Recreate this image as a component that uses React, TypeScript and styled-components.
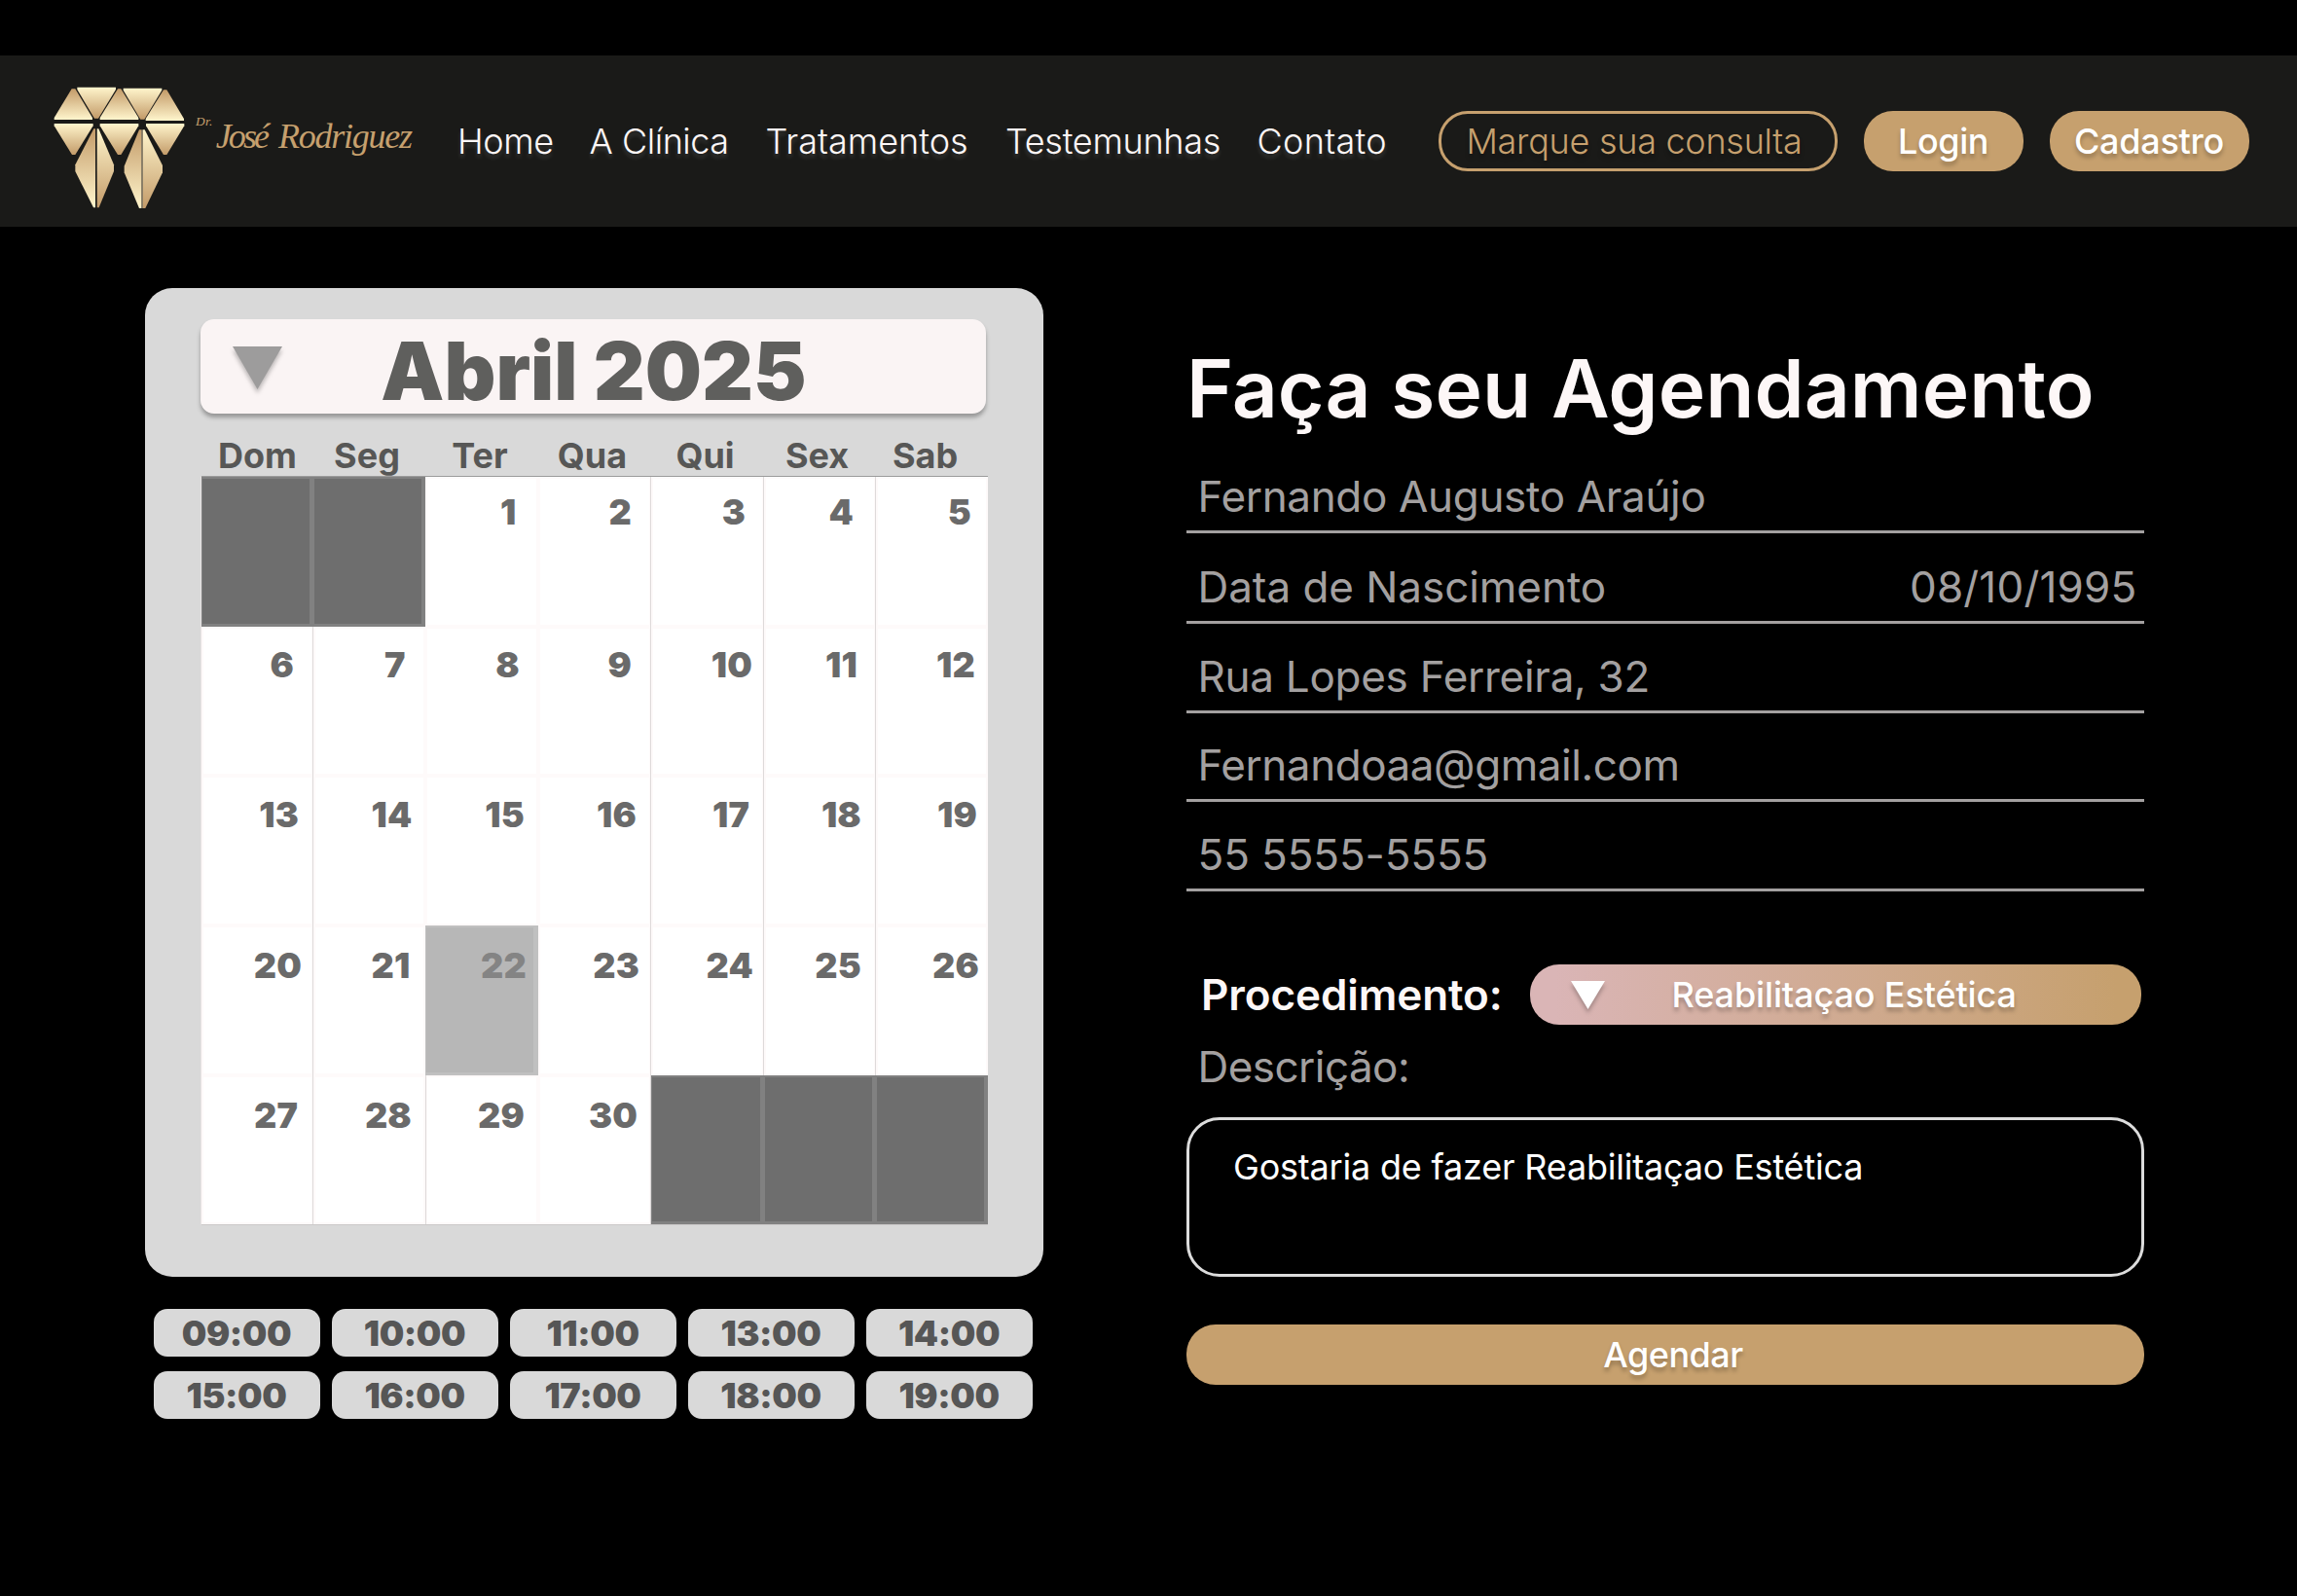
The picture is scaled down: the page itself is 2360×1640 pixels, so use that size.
import React from 'react';
import styled, { createGlobalStyle, css } from 'styled-components';

const GOLD = '#c6a06e';
const SILVER = '#d9d9d9';
const MUTED = '#a3a0a0';

const GlobalStyle = createGlobalStyle`
  *, *::before, *::after { box-sizing: border-box; }
  body {
    margin: 0;
    background: #000;
    font-family: Inter, "Liberation Sans", sans-serif;
    -webkit-font-smoothing: antialiased;
  }
  button { font: inherit; border: 0; margin: 0; padding: 0; background: none; color: inherit; }
`;

const Page = styled.div`
  width: 2360px;
  height: 1640px;
  padding-top: 57px;
  background: #000;
  overflow: hidden;
`;

/* ---------- header ---------- */

const Header = styled.header`
  display: flex;
  align-items: center;
  height: 176px;
  padding: 0 49.5px 0 40px;
  background: #1a1a18;
`;

const Logo = styled.svg`
  display: block;
  flex: none;
  width: 410px;
  height: 160px;
  margin-top: 10px;
  overflow: visible;
`;

const LogoText = styled.text`
  font-family: "Liberation Serif", serif;
  font-style: italic;
  fill: ${GOLD};
`;

const Nav = styled.nav`
  display: grid;
  grid-template-columns: 135.5px 181px 246.5px 258.5px 140px;
  margin-left: 20px;
`;

const NavLink = styled.a<{ $track?: number }>`
  font-size: 36px;
  font-weight: 300;
  line-height: 44px;
  white-space: nowrap;
  letter-spacing: ${(p) => p.$track ?? 0}px;
  color: #fdf7f7;
  text-shadow: 0 4px 4px rgba(255, 255, 255, 0.14);
`;

const Actions = styled.div`
  display: flex;
  gap: 27px;
  margin-left: auto;
`;

const Pill = styled.button<{ $width: number; $track?: number }>`
  display: flex;
  align-items: center;
  justify-content: center;
  width: ${(p) => p.$width}px;
  height: 62px;
  border-radius: 30px;
  background: ${GOLD};
  color: #fff;
  font-size: 36px;
  font-weight: 500;
  line-height: 44px;
  letter-spacing: ${(p) => p.$track ?? 0}px;
  white-space: nowrap;
  text-shadow: 0 4px 4px rgba(0, 0, 0, 0.25);
`;

const OutlinePill = styled(Pill)`
  padding-right: 7px;
  border: 3px solid ${GOLD};
  background: none;
  color: ${GOLD};
  font-weight: 300;
`;

/* ---------- page body ---------- */

const Main = styled.main`
  display: flex;
  align-items: flex-start;
  padding: 63px 157px 0 149px;
`;

const Schedule = styled.section`
  width: 923px;
`;

const CalendarCard = styled.div`
  height: 1016px;
  padding: 32px 57px 0 58px;
  border-radius: 28px;
  background: ${SILVER};
`;

const MonthBar = styled.div`
  display: grid;
  grid-template-columns: 1fr auto 1fr;
  align-items: center;
  width: 807px;
  height: 97px;
  margin-left: -1px;
  padding: 1px 32px 0 33px;
  border-radius: 14px;
  background: #faf4f4;
  box-shadow: 0 4px 4px rgba(0, 0, 0, 0.3);
`;

const Month = styled.h2`
  margin: 0;
  padding-top: 9px;
  font-size: 82px;
  font-weight: 900;
  line-height: 88px;
  color: #5f5f5d;
`;

const Arrow = styled.svg`
  display: block;
  overflow: visible;
  filter: drop-shadow(0 4px 2px rgba(0, 0, 0, 0.25));
`;

const Weekdays = styled.div`
  display: grid;
  grid-template-columns: 115px 115px 116px 116px 116px 115px 115px;
  height: 65px;
  padding-top: 21px;
  border-bottom: 1px solid #9b9b9b;
`;

const Weekday = styled.span<{ $inset: number }>`
  padding-right: ${(p) => p.$inset}px;
  font-size: 36px;
  font-weight: 700;
  line-height: 44px;
  text-align: center;
  color: #575756;
`;

const Days = styled.div`
  display: grid;
  grid-template-columns: 115px 115px 116px 116px 116px 115px 115px;
  grid-template-rows: 154px 153px 154px 154px 153px;
  box-shadow: 0 1px 0 #cbc9c9, -1px 0 0 #e6e2e2;
`;

type Kind = 'open' | 'blocked' | 'selected';

const Day = styled.div<{ $kind: Kind; $inset: number; $top: number; $line?: 'left' | 'right' }>`
  padding-top: ${(p) => p.$top}px;
  padding-right: ${(p) => p.$inset}px;
  font-size: 36px;
  font-weight: 900;
  line-height: 44px;
  letter-spacing: 0.2px;
  text-align: right;
  color: #6a6a6a;
  background: #fff;
  box-shadow: inset ${(p) => (p.$line === 'right' ? '-1px' : p.$line === 'left' ? '1px' : '0')} 0 0 #dedada,
    inset 0 0 0 2px #fefafa;
  ${(p) =>
    p.$kind === 'blocked' &&
    css`
      background: #6e6e6e;
      box-shadow: inset -4px -3px 0 #818181, inset 1px 2px 0 #818181;
    `}
  ${(p) =>
    p.$kind === 'selected' &&
    css`
      background: #b7b7b7;
      color: #848484;
      box-shadow: inset -5px -3px 0 #c0c0c0, inset 1px 2px 0 #c0c0c0;
    `}
`;

const Times = styled.div`
  display: grid;
  grid-template-columns: repeat(5, 171px);
  grid-auto-rows: 49px;
  gap: 15px 12px;
  margin: 33px 0 0 9px;
`;

const Time = styled.button`
  display: flex;
  align-items: center;
  justify-content: center;
  padding-right: 1px;
  border-radius: 14px;
  background: ${SILVER};
  color: #565656;
  font-size: 36px;
  font-weight: 900;
  line-height: 44px;
  letter-spacing: -0.4px;
`;

/* ---------- booking form ---------- */

const Form = styled.section`
  width: 984px;
  margin: 53px 0 0 147px;
`;

const Title = styled.h1`
  margin: 0;
  font-size: 82px;
  font-weight: 600;
  line-height: 101px;
  letter-spacing: 0.05px;
  white-space: nowrap;
  color: #fdf7f7;
`;

const Field = styled.div<{ $height: number; $track?: number }>`
  display: flex;
  align-items: flex-end;
  justify-content: space-between;
  height: ${(p) => p.$height}px;
  padding: 0 7.5px 8px 11.5px;
  border-bottom: 3px solid ${MUTED};
  font-size: 44px;
  line-height: 54px;
  letter-spacing: ${(p) => p.$track ?? 0}px;
  color: ${MUTED};
`;

const DateValue = styled.span`
  letter-spacing: 0.2px;
`;

const ProcedureRow = styled.div`
  display: flex;
  align-items: center;
  justify-content: space-between;
  margin-top: 75px;
  padding: 0 3px 0 15px;
`;

const ProcedureLabel = styled.span`
  font-size: 44px;
  font-weight: 600;
  line-height: 54px;
  letter-spacing: -0.08px;
  color: #fdf7f7;
`;

const ProcedureSelect = styled(Pill)`
  justify-content: flex-start;
  gap: 68.5px;
  padding-left: 42px;
  background: linear-gradient(90deg, #dab5b6 0%, #dab5b6 4%, #c6a06e 96%);
`;

const DescriptionLabel = styled.div`
  margin-top: 16px;
  padding-left: 11.5px;
  font-size: 44px;
  line-height: 54px;
  letter-spacing: -0.55px;
  color: ${MUTED};
`;

const Description = styled.div`
  height: 164px;
  margin-top: 25px;
  padding: 26px 45px;
  border: 3px solid #dcdcdc;
  border-radius: 34px;
  font-size: 36px;
  line-height: 44px;
  letter-spacing: -0.2px;
  color: #fff;
`;

const Submit = styled(Pill)`
  margin-top: 49px;
  padding-left: 16px;
`;

/* ---------- data ---------- */

const NAV: [string, number][] = [
  ['Home', -0.4],
  ['A Clínica', -0.45],
  ['Tratamentos', 0],
  ['Testemunhas', -0.29],
  ['Contato', 0.3],
];

const WEEKDAYS: [string, number][] = [
  ['Dom', 0],
  ['Seg', 5],
  ['Ter', 4],
  ['Qua', 5],
  ['Qui', 5],
  ['Sex', 6],
  ['Sab', 14],
];

/* Each week: top inset of the numbers, then [day, right inset]; null is a day outside the month. */
const WEEKS: { top: number; days: ([number, number] | null)[] }[] = [
  { top: 14, days: [null, null, [1, 22.5], [2, 20], [3, 19], [4, 23], [5, 17]] },
  { top: 17, days: [[6, 20], [7, 20.5], [8, 19], [9, 20], [10, 12], [11, 19], [12, 13]] },
  { top: 18, days: [[13, 15], [14, 13.5], [15, 14], [16, 15], [17, 15], [18, 15], [19, 11]] },
  { top: 19, days: [[20, 12], [21, 15.5], [22, 12], [23, 12], [24, 11], [25, 15], [26, 9]] },
  { top: 19, days: [[27, 16], [28, 14], [29, 14], [30, 14], null, null, null] },
];

const RULED_COLUMNS = [0, 3, 4, 5];
const SELECTED = 22;

const TIMES = ['09:00', '10:00', '11:00', '13:00', '14:00', '15:00', '16:00', '17:00', '18:00', '19:00'];

const UP = [
  '47,153 101,64 112,64 165,153 165,159 47,159',
  '188,153 243,64 253,64 307,153 307,159 188,159',
  '329,156 384,67 394,67 447,156 447,162 329,162',
  '169,187 174,187 174,430 168,430 112,318 112,298',
  '309,190 316,190 316,432 309,432 263,322 263,302',
];

const DOWN = [
  '118,59 237,59 237,66 183,155 171,155 118,66',
  '260,62 379,62 379,68 325,158 313,158 260,68',
  '47,171 167,171 167,178 112,267 102,267 47,178',
  '188,171 307,171 307,178 253,267 243,267 188,178',
  '330,171 448,171 448,178 394,267 384,267 330,178',
  '179,187 184,187 231,298 231,318 185,430 179,430',
  '320,190 326,190 381,300 381,322 328,432 320,432',
];

function Brand() {
  return (
    <Logo viewBox="0 0 1230 480">
      <defs>
        <linearGradient id="rise" x1="0" y1="0" x2="0" y2="1">
          <stop offset="0" stopColor="#c39b69" />
          <stop offset="1" stopColor="#fff5cc" />
        </linearGradient>
        <linearGradient id="fall" x1="0" y1="0" x2="0" y2="1">
          <stop offset="0" stopColor="#fff5cc" />
          <stop offset="1" stopColor="#c39b69" />
        </linearGradient>
      </defs>
      {UP.map((points) => (
        <polygon key={points} points={points} fill="url(#rise)" />
      ))}
      {DOWN.map((points) => (
        <polygon key={points} points={points} fill="url(#fall)" />
      ))}
      <rect x="316" y="190" width="4" height="242" fill="#a5977c" />
      <LogoText x="483" y="177" fontSize="40" textLength="52">Dr.</LogoText>
      <LogoText x="545" y="246" fontSize="108" textLength="166">José</LogoText>
      <LogoText x="738" y="246" fontSize="108" textLength="414">Rodriguez</LogoText>
    </Logo>
  );
}

function Triangle({ width, height, color }: { width: number; height: number; color: string }) {
  return (
    <Arrow width={width} height={height} viewBox={`0 0 ${width} ${height}`}>
      <polygon points={`0,0 ${width},0 ${width / 2},${height}`} fill={color} />
    </Arrow>
  );
}

function Calendar() {
  return (
    <CalendarCard>
      <MonthBar>
        <Triangle width={51} height={44} color="#9d9c9c" />
        <Month>Abril 2025</Month>
      </MonthBar>
      <Weekdays>
        {WEEKDAYS.map(([name, inset]) => (
          <Weekday key={name} $inset={inset}>{name}</Weekday>
        ))}
      </Weekdays>
      <Days>
        {WEEKS.map((week, w) =>
          week.days.map((entry, d) => {
            const day = entry?.[0];
            const kind: Kind = !entry ? 'blocked' : day === SELECTED ? 'selected' : 'open';
            const line = RULED_COLUMNS.includes(d) ? 'right' : day === 29 ? 'left' : undefined;
            return (
              <Day key={`${w}-${d}`} $kind={kind} $top={week.top} $inset={entry?.[1] ?? 0} $line={line}>
                {day}
              </Day>
            );
          }),
        )}
      </Days>
    </CalendarCard>
  );
}

export default function App() {
  return (
    <Page>
      <GlobalStyle />
      <Header>
        <Brand />
        <Nav>
          {NAV.map(([label, track]) => (
            <NavLink key={label} $track={track}>{label}</NavLink>
          ))}
        </Nav>
        <Actions>
          <OutlinePill $width={410} $track={-0.27}>Marque sua consulta</OutlinePill>
          <Pill $width={164} $track={-0.4}>Login</Pill>
          <Pill $width={205} $track={-0.27}>Cadastro</Pill>
        </Actions>
      </Header>
      <Main>
        <Schedule>
          <Calendar />
          <Times>
            {TIMES.map((time) => (
              <Time key={time}>{time}</Time>
            ))}
          </Times>
        </Schedule>
        <Form>
          <Title>Faça seu Agendamento</Title>
          <Field $height={98} $track={-0.33}>Fernando Augusto Araújo</Field>
          <Field $height={93} $track={-0.05}>
            Data de Nascimento
            <DateValue>08/10/1995</DateValue>
          </Field>
          <Field $height={92} $track={-0.27}>Rua Lopes Ferreira, 32</Field>
          <Field $height={91} $track={-0.44}>Fernandoaa@gmail.com</Field>
          <Field $height={92} $track={-0.12}>55 5555-5555</Field>
          <ProcedureRow>
            <ProcedureLabel>Procedimento:</ProcedureLabel>
            <ProcedureSelect $width={628} $track={-0.13}>
              <Triangle width={35} height={29} color="#fff" />
              Reabilitaçao Estética
            </ProcedureSelect>
          </ProcedureRow>
          <DescriptionLabel>Descrição:</DescriptionLabel>
          <Description>Gostaria de fazer Reabilitaçao Estética</Description>
          <Submit $width={984} $track={-0.5}>Agendar</Submit>
        </Form>
      </Main>
    </Page>
  );
}
